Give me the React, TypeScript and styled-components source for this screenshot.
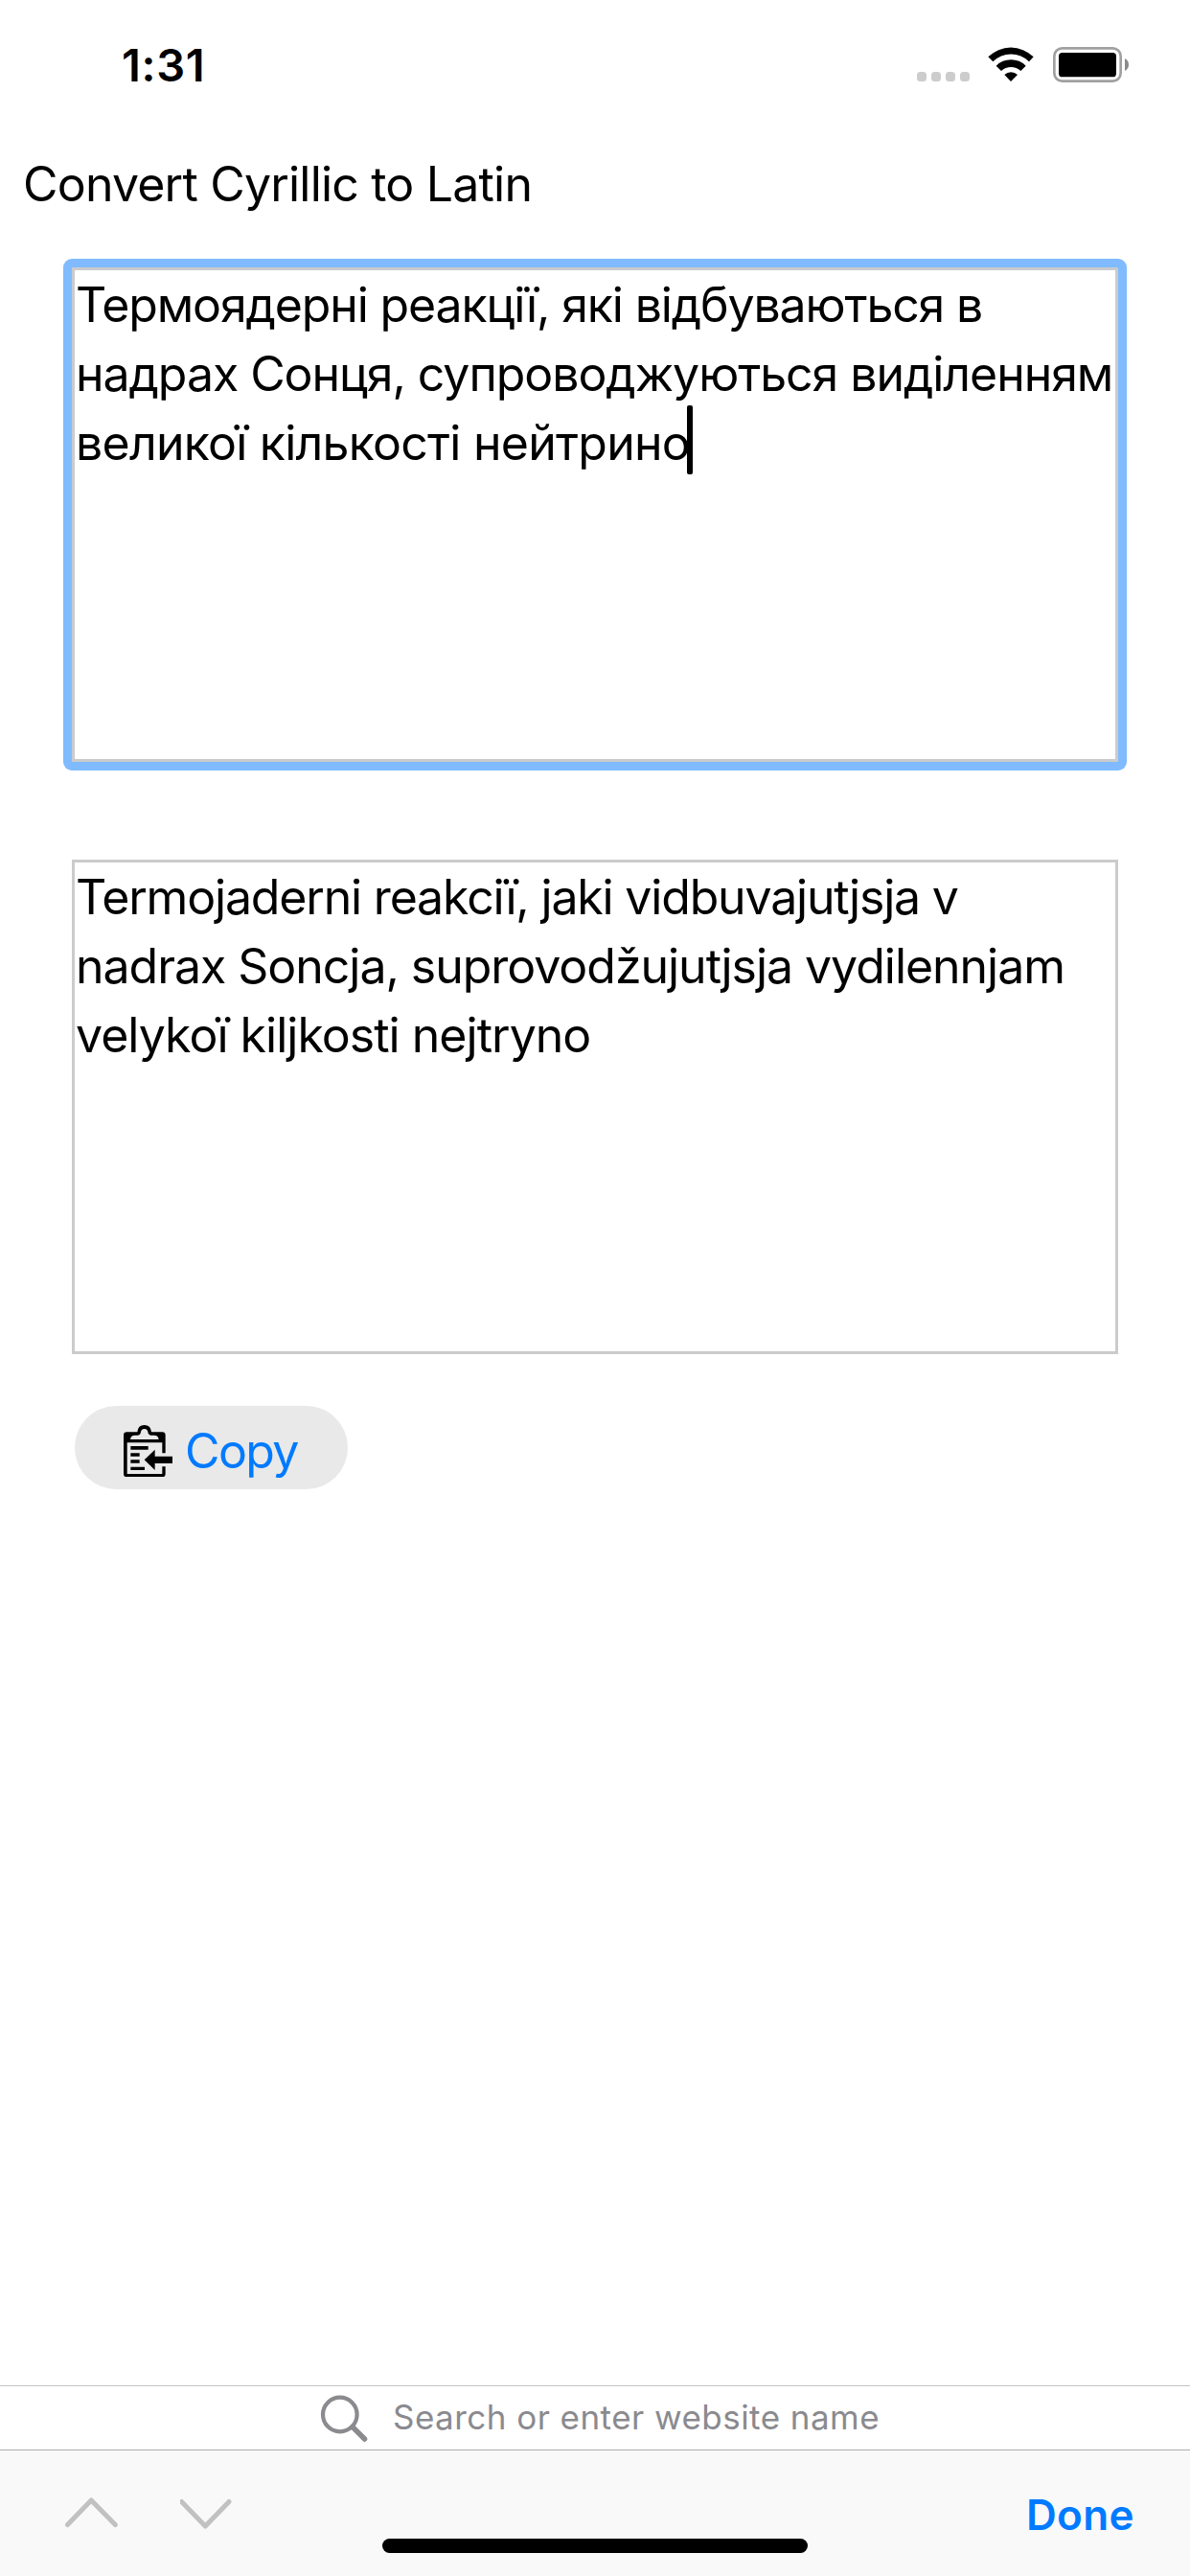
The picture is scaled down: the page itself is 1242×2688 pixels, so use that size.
import React from "react";
import styled, { createGlobalStyle } from "styled-components";

const GlobalStyle = createGlobalStyle`
  * { box-sizing: border-box; }
  body { margin: 0; background: #fff; }
`;

const Screen = styled.div`
  display: flex;
  flex-direction: column;
  width: 1242px;
  height: 2688px;
  overflow: hidden;
  background: #fff;
  color: #000;
  font-family: Inter, "Liberation Sans", sans-serif;
  font-size: 50px;
  line-height: 72px;
`;

const StatusBar = styled.header`
  display: flex;
  justify-content: space-between;
  height: 132px;
  padding: 32px 64px 0 127px;
`;

const Line = styled.span<{ $tracking?: number }>`
  display: block;
  width: max-content;
  white-space: pre;
  letter-spacing: ${(p) => p.$tracking ?? 0}px;
`;

const Clock = styled(Line)`
  font-size: 47px;
  font-weight: 600;
`;

const StatusIcons = styled.div`
  display: flex;
  align-items: flex-start;
  padding-top: 17px;
`;

const SignalDots = styled.div`
  display: flex;
  gap: 5px;
  padding-top: 26px;
  margin-right: 19px;
`;

const Dot = styled.i`
  width: 10px;
  height: 10px;
  border-radius: 3.5px;
  background: #ccc;
`;

const Wifi = styled.svg`
  width: 48px;
  height: 36px;
  margin-right: 20px;
`;

const Battery = styled.svg`
  width: 79px;
  height: 37px;
`;

const Title = styled.h1`
  margin: 24px 0 42px 24px;
  font-size: 50px;
  font-weight: 400;
  line-height: 72px;
`;

const FieldFrame = styled.div<{ $focused?: boolean }>`
  width: 1110px;
  margin: 0 66px;
  padding: 9px;
  border-radius: 9px;
  background: ${(p) => (p.$focused ? "#80bbff" : "transparent")};
  & + & { margin-top: 84px; }
`;

const Field = styled.div`
  height: 516px;
  padding: 0 1px;
  border: 3px solid #cbcbcd;
  background: #fff;
`;

const Caret = styled.i`
  display: inline-block;
  width: 6px;
  height: 72px;
  margin: -3px -3px 0;
  border-radius: 2px;
  background: #000;
  vertical-align: top;
`;

const CopyButton = styled.button`
  display: flex;
  align-items: flex-start;
  gap: 13px;
  width: 285px;
  height: 87px;
  margin: 45px 0 0 78px;
  padding: 11px 0 0 51px;
  border: 0;
  border-radius: 43.5px;
  background: #e9e9e9;
  color: #007aff;
  font: inherit;
`;

const ClipboardIcon = styled.svg`
  width: 51px;
  height: 54.3px;
  margin-top: 8.7px;
`;

const AddressBar = styled.div`
  display: flex;
  align-items: flex-start;
  height: 67px;
  margin-top: auto;
  padding-left: 334px;
  border-top: 1px solid #c4c4c4;
  color: #8a8a8f;
  font-size: 35px;
  line-height: 64px;
`;

const SearchIcon = styled.svg`
  width: 50px;
  height: 50px;
  margin: 9px 26px 0 0;
`;

const Accessory = styled.footer`
  display: grid;
  grid-template-columns: 399px 444px 1fr;
  height: 132px;
  border-top: 1px solid #aeaeb0;
  background: #f9f9f9;
`;

const Arrows = styled.div`
  display: flex;
  gap: 65px;
  padding: 48px 0 0 67px;
`;

const Chevron = styled.svg`
  width: 56px;
  height: 34px;
`;

const HomeIndicator = styled.div`
  height: 15px;
  margin-top: 92px;
  border-radius: 7.5px;
  background: #000;
`;

const Done = styled(Line)`
  justify-self: end;
  margin-right: 58px;
  padding-top: 31px;
  color: #007aff;
  font-size: 44px;
  font-weight: 600;
`;

export default function App() {
  return (
    <Screen>
      <GlobalStyle />
      <StatusBar>
        <Clock $tracking={0.7}>1:31</Clock>
        <StatusIcons>
          <SignalDots><Dot /><Dot /><Dot /><Dot /></SignalDots>
          <Wifi viewBox="334 57 144 108">
            <path d="M335 88A101 101 0 0 1 477 88L463 103A80 80 0 0 0 350 103Z" />
            <path d="M360 116A65 65 0 0 1 453 116L437 132A44 44 0 0 0 376 132Z" />
            <path d="M386 144A30 30 0 0 1 427 144L406 165Z" />
          </Wifi>
          <Battery viewBox="537 57 237 111">
            <rect x="541" y="61" width="208" height="103" rx="25" fill="none" stroke="#a0a0a0" strokeWidth="8" />
            <rect x="555" y="75" width="180" height="76" rx="11" />
            <path d="M762 93Q774 100 774 112.500Q774 125 762 132Z" fill="#8a8a8a" />
          </Battery>
        </StatusIcons>
      </StatusBar>
      <Title><Line $tracking={-0.8}>Convert Cyrillic to Latin</Line></Title>
      <FieldFrame $focused>
        <Field>
          <Line $tracking={-1.14}>Термоядерні реакції, які відбуваються в</Line>
          <Line $tracking={-1.06}>надрах Сонця, супроводжуються виділенням</Line>
          <Line $tracking={-0.75}>великої кількості нейтрино<Caret /></Line>
        </Field>
      </FieldFrame>
      <FieldFrame>
        <Field>
          <Line $tracking={-1.18}>Termojaderni reakciï, jaki vidbuvajutjsja v</Line>
          <Line $tracking={-1.03}>nadrax Soncja, suprovodžujutjsja vydilennjam</Line>
          <Line $tracking={-0.98}>velykoï kiljkosti nejtryno</Line>
        </Field>
      </FieldFrame>
      <CopyButton>
        <ClipboardIcon viewBox="0 0 153 163">
          <path d="M0 32Q0 22 10 22H43Q45 0 65 0Q85 0 87 22H121Q131 22 131 32V88H121V55H11V153H121V130H131V153Q131 163 121 163H10Q0 163 0 153Z" />
          <path d="M21 45Q22 32 36 32H45Q53 31 54 21Q56 12 65 12Q74 12 76 21Q77 31 85 32H95Q109 32 110 45Z" fill="#e9e9e9" />
          <path d="M22 66H77V77H22ZM22 88H50V98H22ZM22 109H50V119H22ZM22 131H66V141H22Z" />
          <path d="M65 109L98 77V98H153V120H98V141Z" />
        </ClipboardIcon>
        <Line $tracking={-1.6}>Copy</Line>
      </CopyButton>
      <AddressBar>
        <SearchIcon viewBox="0 0 50 50" fill="none" stroke="#8a8a8f" strokeLinecap="round">
          <circle cx="20.800" cy="20.500" r="17.800" strokeWidth="4.200" />
          <path d="M34 33.500L46.500 46" strokeWidth="5.500" />
        </SearchIcon>
        <Line $tracking={0.46}>Search or enter website name</Line>
      </AddressBar>
      <Accessory>
        <Arrows>
          <Chevron viewBox="67 2605 56 34" fill="none" stroke="#c1c1c1" strokeWidth="5" strokeLinecap="round" strokeLinejoin="round">
            <path d="M70.500 2634.500L95.200 2609L120.300 2634.500" />
          </Chevron>
          <Chevron viewBox="188 2605 56 34" fill="none" stroke="#c1c1c1" strokeWidth="5" strokeLinecap="round" strokeLinejoin="round">
            <path d="M189.500 2610.500L214.300 2636L239 2610.500" />
          </Chevron>
        </Arrows>
        <HomeIndicator />
        <Done $tracking={0.4}>Done</Done>
      </Accessory>
    </Screen>
  );
}
